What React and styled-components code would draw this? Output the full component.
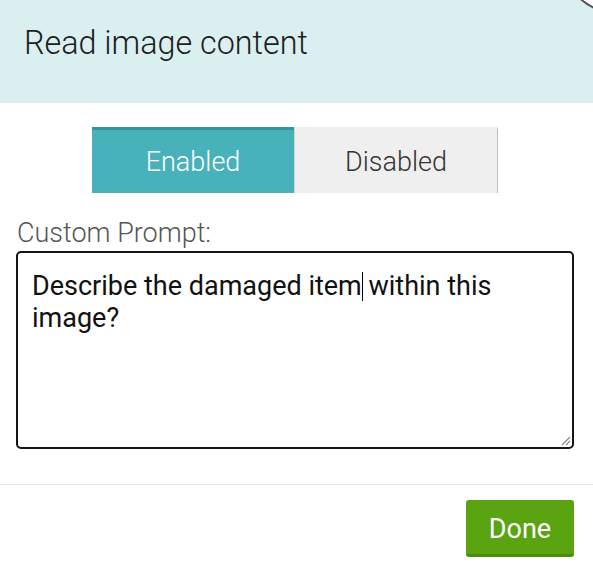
import React from "react";
import styled, { createGlobalStyle } from "styled-components";

const Global = createGlobalStyle`
  html, body {
    margin: 0;
    padding: 0;
    background: #fff;
    font-family: Roboto, "Liberation Sans", sans-serif;
  }
`;

const Dialog = styled.div`
  position: relative;
  width: 593px;
  height: 569px;
  overflow: hidden;
  background: #fff;
`;

const Header = styled.div`
  height: 103px;
  box-sizing: border-box;
  padding: 24px 24px 0;
  background: #daeff0;
`;

const Title = styled.h2`
  margin: 0;
  font-size: 32.3px;
  font-weight: 300;
  line-height: 38px;
  color: #1d1d1d;
`;

const CloseCircle = styled.div`
  position: absolute;
  box-sizing: border-box;
  top: -102px;
  right: -83px;
  width: 116px;
  height: 116px;
  border-radius: 50%;
  background: #fff;
  border: 2px solid #555;
`;

const Body = styled.div`
  padding: 24px 16px 0;
`;

const Toggle = styled.div`
  display: flex;
  justify-content: center;
  padding-right: 3px;
`;

const Tab = styled.div`
  box-sizing: border-box;
  width: ${p => (p.$active ? 202 : 204)}px;
  height: 66px;
  display: flex;
  align-items: center;
  justify-content: center;
  font-size: 27px;
  font-weight: 300;
  background: ${p => (p.$active ? "#48b2bb" : "#efefef")};
  color: ${p => (p.$active ? "#fff" : "#333")};
  border-top: 3px solid ${p => (p.$active ? "#3a9198" : "#efefef")};
  border-left: ${p => (p.$active ? "none" : "1px solid #d2d2d2")};
  border-right: ${p => (p.$active ? "none" : "1px solid #bcbcbc")};
`;

const Label = styled.div`
  margin-top: 24px;
  padding-left: 1px;
  font-size: 27px;
  font-weight: 300;
  color: #555;
  line-height: 32px;
`;

const Prompt = styled.div`
  position: relative;
  margin-top: 2px;
  width: 558px;
  height: 198px;
  box-sizing: border-box;
  border: 2px solid #151515;
  border-radius: 5px;
  padding: 17px 20px 0 14px;
  font-size: 27px;
  line-height: 32px;
  color: #111;
`;

const Caret = styled.span`
  display: inline-block;
  width: 1px;
  height: 29px;
  margin-right: -1px;
  vertical-align: -6px;
  background: #000;
`;

const Grip = styled.svg`
  position: absolute;
  right: 1px;
  bottom: 1px;
`;

const Divider = styled.hr`
  margin: 35px 0 0;
  border: none;
  border-top: 1px solid #e6e6e6;
`;

const Footer = styled.div`
  display: flex;
  justify-content: flex-end;
  padding: 15px 19px 0;
`;

const Button = styled.button`
  width: 108px;
  height: 57px;
  border: none;
  border-bottom: 3px solid #4a8a0c;
  border-radius: 3px;
  background: #5aa412;
  color: #fff;
  font-family: Roboto, "Liberation Sans", sans-serif;
  font-size: 27px;
  padding: 3px 0 0;
`;

export default function App() {
  return (
    <Dialog>
      <Global />
      <Header>
        <Title>Read image content</Title>
      </Header>
      <CloseCircle />
      <Body>
        <Toggle>
          <Tab $active>Enabled</Tab>
          <Tab>Disabled</Tab>
        </Toggle>
        <Label>Custom Prompt:</Label>
        <Prompt>
          Describe the damaged item<Caret /> within this image?
          <Grip width="12" height="12" viewBox="0 0 12 12">
            <path d="M11 3 L3 11 M11 7 L7 11" stroke="#888" strokeWidth="1.2" />
          </Grip>
        </Prompt>
      </Body>
      <Divider />
      <Footer>
        <Button>Done</Button>
      </Footer>
    </Dialog>
  );
}
